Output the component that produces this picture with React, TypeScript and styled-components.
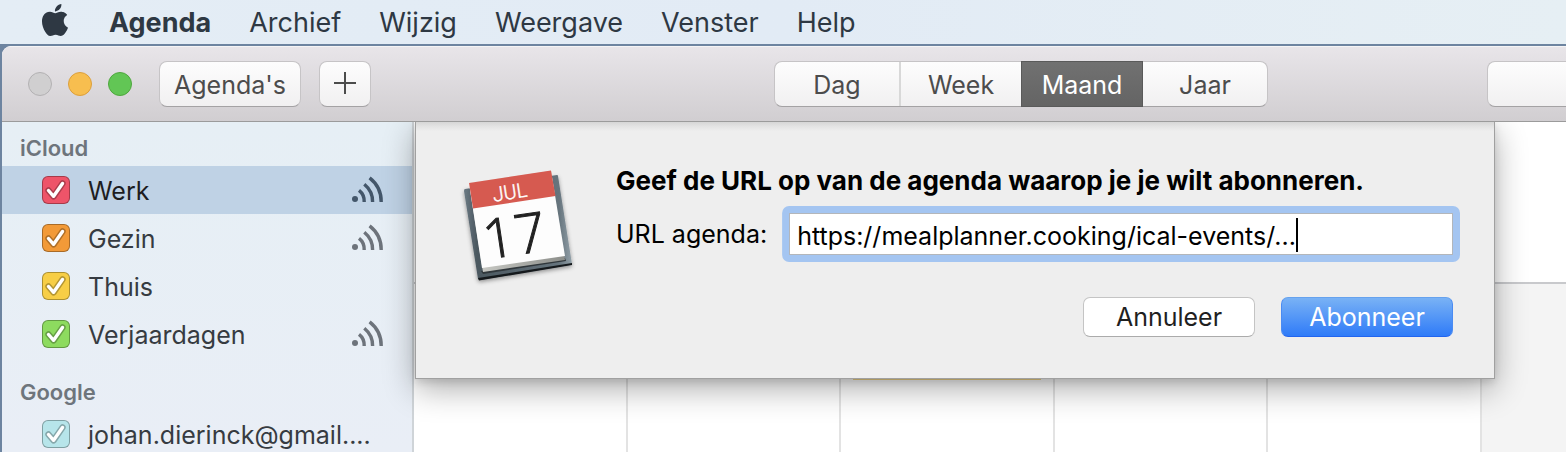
import React from "react";
import styled, { createGlobalStyle, css } from "styled-components";
import { SiApple } from "react-icons/si";

const GlobalStyle = createGlobalStyle`
  *, *::before, *::after { box-sizing: border-box; }
  html, body, #root { height: 100%; }
  body {
    margin: 0;
    overflow: hidden;
    font-family: Inter, "Liberation Sans", sans-serif;
    font-size: 25px;
    line-height: 32px;
    background: #6d84a0;
  }
  button, input { font: inherit; margin: 0; }
`;

const Desktop = styled.div`
  display: flex;
  flex-direction: column;
  height: 100%;
`;

const MenuBar = styled.nav`
  display: flex;
  align-items: center;
  gap: 38px;
  height: 44px;
  flex: none;
  padding-left: 39px;
  background: linear-gradient(90deg, #e4edf5, #e2ebf5 50%, #e6eff4);
  color: #2e3843;
  font-size: 27px;
`;

const AppleLogo = styled(SiApple)`
  width: 32px;
  height: 32px;
  margin: 0 0 4px 0;
`;

const MenuItem = styled.a<{ $bold?: boolean }>`
  padding-top: 2px;
  color: inherit;
  text-decoration: none;
  font-weight: ${(p) => (p.$bold ? 700 : 400)};
`;

const Window = styled.main`
  display: flex;
  flex-direction: column;
  flex: 1;
  min-height: 0;
  margin: 2px 0 0 2px;
  border-top-left-radius: 9px;
  overflow: hidden;
  background: #fff;
`;

const Toolbar = styled.header`
  display: flex;
  align-items: center;
  flex: none;
  height: 76px;
  padding: 0 0 0 26px;
  border-top: 1px solid #f5f4f5;
  border-bottom: 1px solid #9b9b9b;
  background: linear-gradient(#e8e5e9, #d1ced1);
  position: relative;
  z-index: 2;
`;

const Lights = styled.div`
  display: flex;
  gap: 16px;
  margin-right: 27px;
`;

const Light = styled.button<{ $color: string; $edge: string }>`
  width: 24px;
  height: 24px;
  padding: 0;
  border: 1px solid ${(p) => p.$edge};
  border-radius: 50%;
  background: ${(p) => p.$color};
`;

const control = css`
  height: 46px;
  border: 1px solid #c6c4c6;
  border-bottom-color: #a4a2a4;
  border-radius: 8px;
  background: linear-gradient(#fdfdfd, #f1f0f1);
  color: #4c4c4c;
`;

const ToolButton = styled.button<{ $icon?: boolean }>`
  ${control}
  display: flex;
  align-items: center;
  justify-content: center;
  padding: ${(p) => (p.$icon ? "0 14px 2px" : "2px 14px 0")};
  margin-right: 18px;
`;

const Spacer = styled.div`
  flex: 1;
`;

const Segments = styled.div`
  ${control}
  display: flex;
  margin-right: 219px;
`;

const Segment = styled.button<{ $width: number; $active?: boolean; $divided?: boolean }>`
  width: ${(p) => p.$width}px;
  padding: 2px 0 0;
  border: 0;
  border-right: ${(p) => (p.$divided ? "2px solid #d8d8d8" : "0")};
  background: transparent;
  color: inherit;
  ${(p) =>
    p.$active &&
    css`
      margin: -1px 0;
      border: 1px solid #5a5a5a;
      background: linear-gradient(#717171, #646464);
      color: #fff;
    `}
`;

const SearchBox = styled.input`
  ${control}
  width: 79px;
  padding: 0 12px;
  border-right: 0;
  border-radius: 8px 0 0 8px;
`;

const Body = styled.div`
  display: flex;
  flex: 1;
  min-height: 0;
  position: relative;
`;

const Sidebar = styled.aside`
  width: 412px;
  flex: none;
  border-right: 2px solid #cfd4d8;
  background: linear-gradient(#e6eff5, #e9eef6);
  color: #363b41;
`;

const GroupTitle = styled.h2`
  margin: 0;
  padding: 10px 18px 2px;
  font-size: 22px;
  line-height: 32px;
  font-weight: 600;
  color: #6e757c;
`;

const GroupList = styled.ul`
  margin: 0 0 8px;
  padding: 0;
  list-style: none;
`;

const CalendarRow = styled.li<{ $selected?: boolean }>`
  display: flex;
  align-items: center;
  height: 48px;
  padding: 0 28px 0 40px;
  color: ${(p) => (p.$selected ? "#1d1d1f" : "inherit")};
  background: ${(p) => (p.$selected ? "#bfd2e5" : "transparent")};
`;

const RowLabel = styled.label`
  display: flex;
  align-items: center;
  gap: 18px;
  flex: 1;
  min-width: 0;
  white-space: nowrap;
`;

const RowName = styled.span`
  padding-top: 2px;
`;

const TickBox = styled.span`
  display: grid;
  width: 28px;
  height: 28px;
  flex: none;
  > * {
    grid-area: 1 / 1;
  }
  svg {
    pointer-events: none;
  }
`;

const TickInput = styled.input<{ $color: string }>`
  appearance: none;
  width: 28px;
  height: 28px;
  border: 1px solid rgba(0, 0, 0, 0.3);
  border-radius: 6px;
  background: ${(p) => p.$color};
  background-clip: border-box;
`;

const Feed = styled.svg<{ $strong?: boolean }>`
  width: 34px;
  height: 28px;
  flex: none;
  margin-bottom: 2px;
  color: ${(p) => (p.$strong ? "#43566a" : "#6d737b")};
`;

const Month = styled.section`
  display: grid;
  grid-template-columns: repeat(5, 89fr) 35fr;
  grid-template-rows: 162px 1fr;
  flex: 1;
  min-width: 0;
`;

const MonthHead = styled.div`
  grid-column: 1 / -1;
  border-bottom: 2px solid #c8c9cc;
`;

const Day = styled.div<{ $weekend?: boolean }>`
  padding: 72px 12px 0;
  border-right: ${(p) => (p.$weekend ? "0" : "2px solid #e3e3e3")};
  background: ${(p) => (p.$weekend ? "#f4f4f4" : "#fff")};
`;

const EventBar = styled.div`
  height: 24px;
  background: #f5d88c;
`;

const Sheet = styled.form`
  position: absolute;
  top: 0;
  left: 413px;
  right: 71px;
  display: flex;
  gap: 23px;
  height: 257px;
  padding: 28px 41px 0 24px;
  border: 1px solid #a0a0a0;
  border-top: 0;
  background: linear-gradient(#d6d6d6, #e2e2e2 4px, #eeeeee 9px);
  box-shadow: 0 10px 30px rgba(0, 0, 0, 0.32), 0 3px 8px rgba(0, 0, 0, 0.12);
  color: #000;
`;

const CalendarIcon = styled.svg`
  width: 153px;
  height: 150px;
  flex: none;
`;

const SheetMain = styled.div`
  flex: 1;
  min-width: 0;
  padding-top: 15px;
`;

const SheetTitle = styled.h1`
  margin: 0;
  font-size: 26px;
  line-height: 32px;
  font-weight: 700;
  white-space: nowrap;
`;

const FieldRow = styled.div`
  display: flex;
  align-items: center;
  gap: 22px;
  margin-top: 16px;
`;

const Field = styled.div`
  display: flex;
  align-items: center;
  flex: 1;
  min-width: 0;
  height: 42px;
  padding: 4px 7px 0;
  border: 1px solid #b3b6ba;
  background: #fff;
  box-shadow: 0 0 0 7px #a4c5f1;
  clip-path: inset(-7px round 7px);
`;

const UrlInput = styled.input`
  field-sizing: content;
  min-width: 0;
  height: 34px;
  padding: 0;
  border: 0;
  outline: 0;
  background: transparent;
  color: #000;
  caret-color: transparent;
`;

const Caret = styled.span`
  width: 2px;
  height: 34px;
  margin-bottom: 2px;
  background: #000;
`;

const Actions = styled.div`
  display: flex;
  justify-content: flex-end;
  gap: 26px;
  margin-top: 42px;
`;

const ActionButton = styled.button<{ $primary?: boolean }>`
  width: 172px;
  height: 40px;
  padding: 0;
  border: 1px solid #c4c4c4;
  border-bottom-color: #ababab;
  border-radius: 7px;
  background: #fff;
  color: #1f1f1f;
  ${(p) =>
    p.$primary &&
    css`
      border-color: #66a2ee #4a8bf2 #2264ee;
      background: linear-gradient(#79b2f5, #2f7bf8);
      color: #fff;
    `}
`;

type Calendar = { name: string; color: string; feed?: boolean; selected?: boolean };

const groups: { title: string; calendars: Calendar[] }[] = [
  {
    title: "iCloud",
    calendars: [
      { name: "Werk", color: "#ee5469", feed: true, selected: true },
      { name: "Gezin", color: "#f29a38", feed: true },
      { name: "Thuis", color: "#f7ce46" },
      { name: "Verjaardagen", color: "#8ddb5f", feed: true },
    ],
  },
  { title: "Google", calendars: [{ name: "johan.dierinck@gmail....", color: "#b7e5ea" }] },
];

function Tick({ color }: { color: string }) {
  return (
    <TickBox>
      <TickInput type="checkbox" defaultChecked $color={color} />
      <svg viewBox="0 0 28 28" fill="none" strokeLinecap="round" strokeLinejoin="round" aria-hidden>
        <path d="M6.5 14.5 11.6 20.3 20.5 7.5" stroke="rgba(0,0,0,.27)" strokeWidth="6.4" />
        <path d="M6.5 14.5 11.6 20.3 20.5 7.5" stroke="#fff" strokeWidth="3.4" />
      </svg>
    </TickBox>
  );
}

function FeedMark({ strong }: { strong?: boolean }) {
  return (
    <Feed $strong={strong} viewBox="0 0 34 28" fill="none" stroke="currentColor" strokeWidth="3.4" aria-hidden>
      <circle cx="5" cy="24" r="3" fill="currentColor" stroke="none" />
      <path d="M9 15.3C12.6 18 14.4 22 14.2 27" />
      <path d="M14.3 9.3C20 14 22.7 20 22.6 27" />
      <path d="M19.6 2.8C27.5 9 31.4 17 31.2 27" />
    </Feed>
  );
}

function CalendarArt() {
  return (
    <CalendarIcon viewBox="0 0 153 150" aria-hidden>
      <defs>
        <linearGradient id="plate" x1="0" y1="0" x2="1" y2="0">
          <stop offset="0" stopColor="#6c7a84" />
          <stop offset="0.12" stopColor="#4b5860" />
          <stop offset="0.88" stopColor="#66747d" />
          <stop offset="1" stopColor="#93a1a9" />
        </linearGradient>
        <linearGradient id="pages" x1="0" y1="0" x2="1" y2="0">
          <stop offset="0" stopColor="#d0d1cc" />
          <stop offset="1" stopColor="#8c8e8a" />
        </linearGradient>
        <filter id="soft" x="-20%" y="-20%" width="140%" height="140%">
          <feDropShadow dx="0" dy="2" stdDeviation="2" floodOpacity="0.4" />
        </filter>
      </defs>
      <path d="M25 39 117 25Q118 25 118 26L132 114Q132 115 131 115L40 130Q39 130 38 129L24 41Q24 39 25 39Z" fill="url(#plate)" filter="url(#soft)" />
      <path d="M38 128 132 113 132 115 39 130.500Z" fill="#15191c" />
      <path d="M41 121 125 108 126 111 43 124Z" fill="#30373b" />
      <path d="M29 33 111 21 125 110 43 122Z" fill="url(#pages)" />
      <path d="M29 33 111 21 125 106 42 118Z" fill="#fdfdfd" />
      <path d="M29 33 111 20.500 115.500 46 33 58.500Z" fill="#d65a50" />
      <g transform="rotate(-8.500 73 70)" textAnchor="middle" fontWeight="300">
        <text x="74" y="49" fontSize="20" fill="#fff" stroke="#fff" strokeWidth="0.4" fontFamily="Roboto, sans-serif">JUL</text>
        <text x="72" y="105" fontSize="55" fill="#222" stroke="#222" strokeWidth="1" fontFamily="'Open Sans', 'Noto Sans', sans-serif">17</text>
      </g>
    </CalendarIcon>
  );
}

export default function App() {
  return (
    <Desktop>
      <GlobalStyle />
      <MenuBar>
        <AppleLogo aria-hidden />
        <MenuItem href="#" $bold>Agenda</MenuItem>
        <MenuItem href="#">Archief</MenuItem>
        <MenuItem href="#">Wijzig</MenuItem>
        <MenuItem href="#">Weergave</MenuItem>
        <MenuItem href="#">Venster</MenuItem>
        <MenuItem href="#">Help</MenuItem>
      </MenuBar>
      <Window>
        <Toolbar>
          <Lights>
            <Light type="button" aria-label="Sluit" $color="#d0cfd0" $edge="#b3b1b3" />
            <Light type="button" aria-label="Minimaliseer" $color="#f7be4f" $edge="#dc9f3c" />
            <Light type="button" aria-label="Vergroot" $color="#62c655" $edge="#4fa73e" />
          </Lights>
          <ToolButton type="button">Agenda's</ToolButton>
          <ToolButton type="button" aria-label="Voeg toe" $icon>
            <svg width="22" height="22" viewBox="0 0 22 22" stroke="#4c4c4c" strokeWidth="2" aria-hidden>
              <path d="M11 0V22M0 11H22" />
            </svg>
          </ToolButton>
          <Spacer />
          <Segments>
            <Segment type="button" $width={126} $divided>Dag</Segment>
            <Segment type="button" $width={120}>Week</Segment>
            <Segment type="button" $width={122} $active>Maand</Segment>
            <Segment type="button" $width={124}>Jaar</Segment>
          </Segments>
          <SearchBox type="text" aria-label="Zoek" />
        </Toolbar>
        <Body>
          <Sidebar>
            {groups.map((group) => (
              <React.Fragment key={group.title}>
                <GroupTitle>{group.title}</GroupTitle>
                <GroupList>
                  {group.calendars.map((c) => (
                    <CalendarRow key={c.name} $selected={c.selected}>
                      <RowLabel>
                        <Tick color={c.color} />
                        <RowName>{c.name}</RowName>
                      </RowLabel>
                      {c.feed && <FeedMark strong={c.selected} />}
                    </CalendarRow>
                  ))}
                </GroupList>
              </React.Fragment>
            ))}
          </Sidebar>
          <Month>
            <MonthHead />
            <Day />
            <Day />
            <Day>
              <EventBar />
            </Day>
            <Day />
            <Day />
            <Day $weekend />
          </Month>
          <Sheet>
            <CalendarArt />
            <SheetMain>
              <SheetTitle>Geef de URL op van de agenda waarop je je wilt abonneren.</SheetTitle>
              <FieldRow>
                <label htmlFor="url">URL agenda:</label>
                <Field>
                  <UrlInput id="url" type="text" defaultValue="https://mealplanner.cooking/ical-events/..." />
                  <Caret />
                </Field>
              </FieldRow>
              <Actions>
                <ActionButton type="button">Annuleer</ActionButton>
                <ActionButton type="button" $primary>Abonneer</ActionButton>
              </Actions>
            </SheetMain>
          </Sheet>
        </Body>
      </Window>
    </Desktop>
  );
}
